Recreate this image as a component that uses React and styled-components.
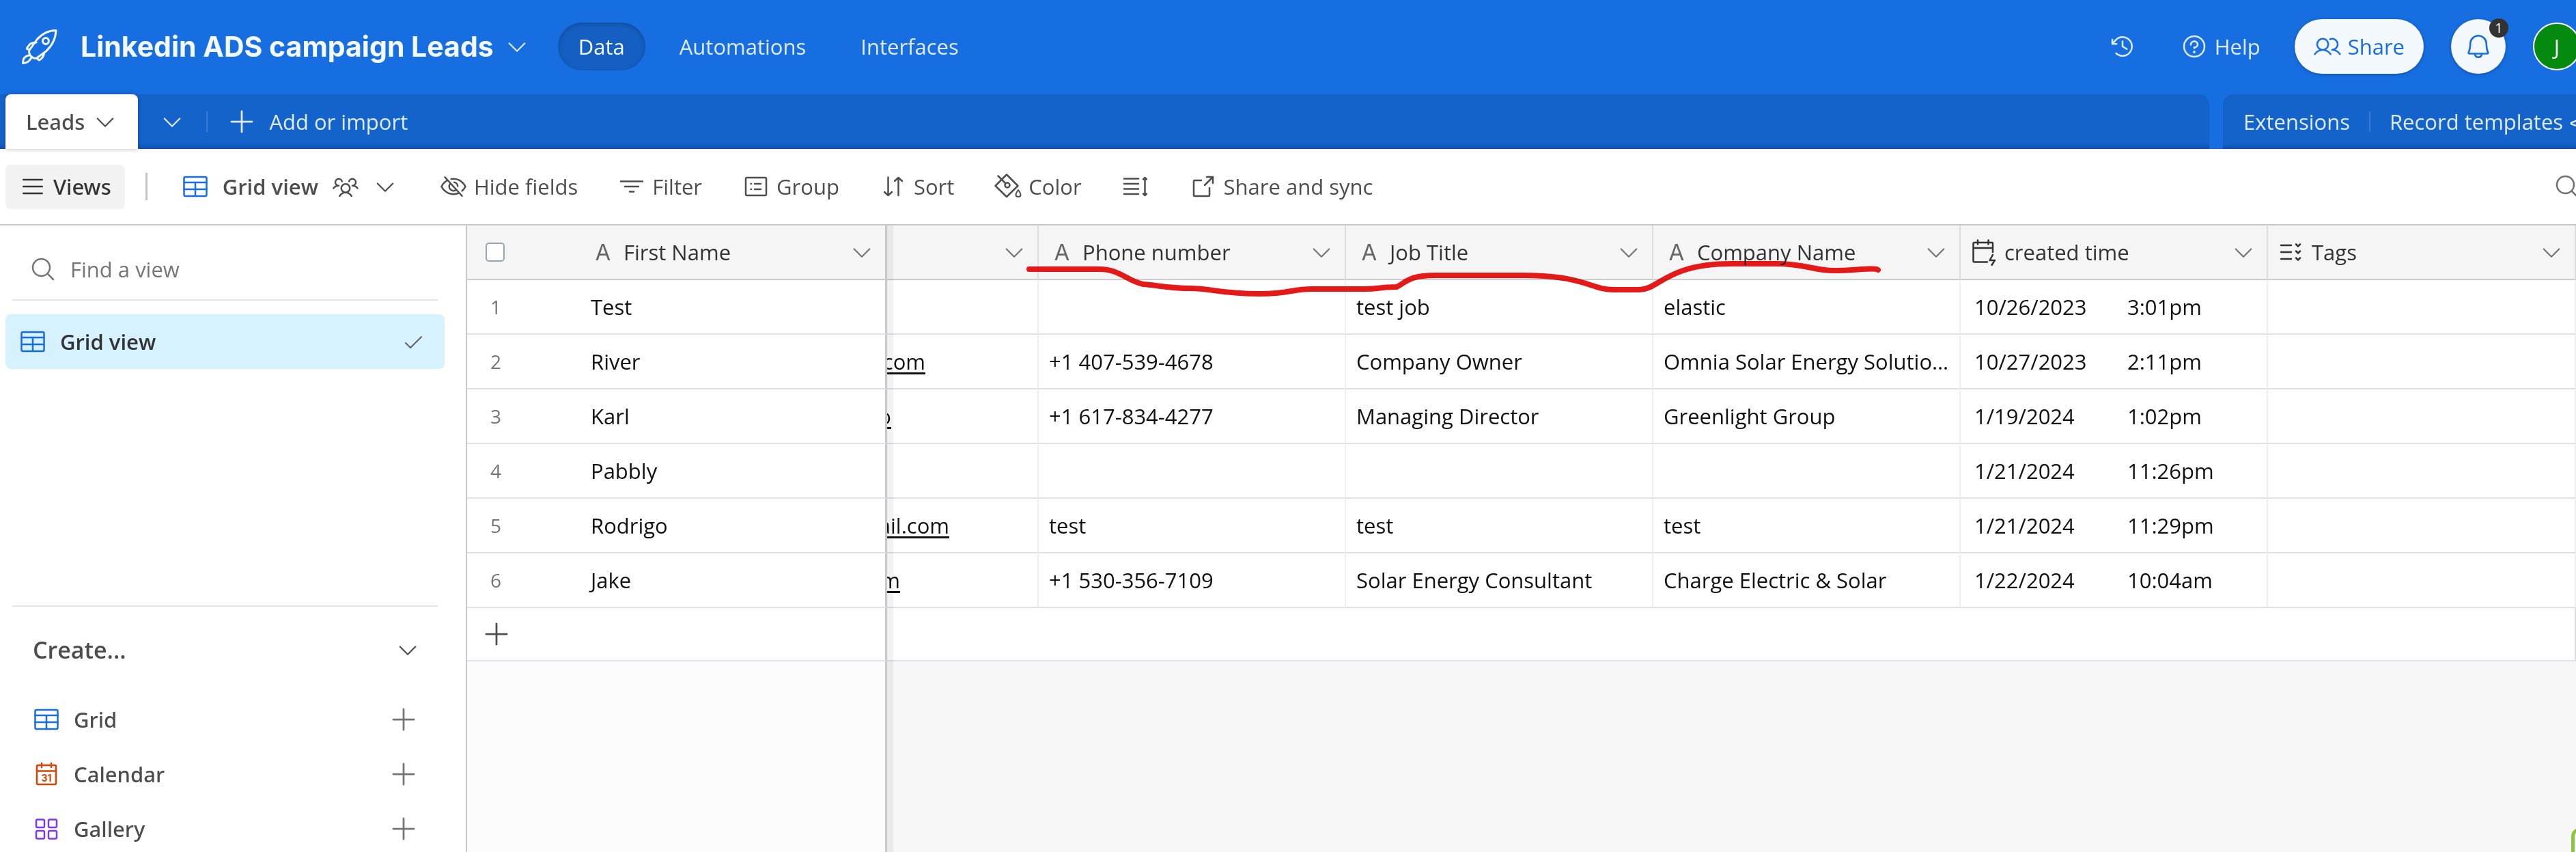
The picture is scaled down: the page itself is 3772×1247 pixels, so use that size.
import React from "react";
import styled, { createGlobalStyle } from "styled-components";
import {
  PiBell,
  PiCaretDown,
  PiCheck,
  PiClockCounterClockwise,
  PiEyeSlash,
  PiList,
  PiMagnifyingGlass,
  PiPlus,
  PiQuestion,
  PiSparkle,
  PiUsers,
  PiUsersThree,
} from "react-icons/pi";

const GlobalStyle = createGlobalStyle`
  * {
    box-sizing: border-box;
  }
  body {
    margin: 0;
    font-family: "Open Sans", "Noto Sans", sans-serif;
    font-size: 31px;
    line-height: 40px;
    color: #4d4d4d;
    background: #ffffff;
  }
  button, input {
    font: inherit;
    color: inherit;
  }
  button {
    border: 0;
    padding: 0;
    background: none;
    white-space: nowrap;
    cursor: pointer;
  }
  svg {
    flex-shrink: 0;
    display: block;
  }
`
const Page = styled.div`
  position: relative;
  display: flex;
  flex-direction: column;
  height: 100vh;
  overflow: hidden;
`

/* top bar */
const TopBar = styled.header`
  display: flex;
  align-items: center;
  justify-content: space-between;
  height: 138px;
  flex-shrink: 0;
  padding: 0 0 2px 28px;
  background: #176ee1;
  color: #dfebfb;
`
const BarSide = styled.div`
  display: flex;
  align-items: center;
`
const BaseName = styled.h1`
  margin: 0 16px 0 30px;
  font-family: "Inter", sans-serif;
  font-size: 41px;
  font-weight: 700;
  line-height: 50px;
  color: #f3f8fd;
  white-space: nowrap;
`
const Nav = styled.nav`
  display: flex;
  gap: 20px;
  margin-left: 42px;
`
const NavLink = styled.a`
  height: 70px;
  line-height: 70px;
  padding: 0 30px;
  border-radius: 35px;
  text-decoration: none;
  color: ${props => props.$active ? "#f3f8fd" : "#dfebfb"};
  background: ${props => props.$active ? "#145fc1" : "transparent"};
  box-shadow: ${props => props.$active ? "inset 0 2px 6px rgba(0, 0, 0, 0.2)" : "none"};
`
const IconButton = styled.button`
  display: flex;
  align-items: center;
  gap: ${props => props.$gap || 10}px;
`
const HelpArea = styled.div`
  display: flex;
  align-items: center;
  gap: 65px;
  margin-right: 50px;
`
const ShareButton = styled(IconButton)`
  height: 80px;
  padding: 0 28px;
  border-radius: 40px;
  background: #f3f8fd;
  color: #176ee1;
  box-shadow: 0 1px 5px rgba(0, 0, 0, 0.3);
`
const BellButton = styled.button`
  position: relative;
  display: grid;
  place-items: center;
  width: 80px;
  height: 80px;
  margin: 0 40px;
  border-radius: 50%;
  background: #f3f8fd;
  color: #176ee1;
  box-shadow: 0 1px 5px rgba(0, 0, 0, 0.3);
`
const Badge = styled.span`
  position: absolute;
  top: -1px;
  right: -4px;
  width: 28px;
  height: 28px;
  border-radius: 50%;
  background: #333333;
  color: #ffffff;
  font-size: 20px;
  line-height: 28px;
`
const Avatar = styled.div`
  width: 70px;
  height: 70px;
  margin-right: -7px;
  border: 2px solid #ffffff;
  border-radius: 50%;
  background: #048a0e;
  color: #ffffff;
  line-height: 66px;
  text-align: center;
`

/* table tabs */
const TabBar = styled.div`
  display: flex;
  gap: 20px;
  height: 80px;
  flex-shrink: 0;
  background: #176ee1;
  color: #dfebfb;
`
const TabPanel = styled.div`
  display: flex;
  align-items: center;
  background: #1463cb;
  box-shadow: inset 0 -8px 6px -5px rgba(0, 0, 60, 0.25);
  white-space: nowrap;
`
const TablesPanel = styled(TabPanel)`
  flex: 1;
  padding-left: 8px;
  border-top-right-radius: 15px;
`
const ToolsPanel = styled(TabPanel)`
  flex: 0 0 517px;
  gap: 28px;
  padding-left: 30px;
  border-top-left-radius: 15px;
  overflow: hidden;
`
const TableTab = styled.button`
  display: flex;
  align-items: center;
  gap: 12px;
  height: 80px;
  padding: 0 30px;
  border-radius: 8px 8px 0 0;
  background: #ffffff;
  color: #4d4d4d;
  font-family: "Noto Sans", sans-serif;
  font-weight: 500;
  box-shadow: 0 0 6px rgba(0, 0, 60, 0.3);
`
const TabDivider = styled.div`
  flex-shrink: 0;
  width: 2px;
  height: 30px;
  background: #3a7cd4;
`
const TabCaret = styled.button`
  margin: 0 32px;
`
const AddTable = styled(IconButton)`
  margin-left: 28px;
`

/* view toolbar */
const Toolbar = styled.div`
  display: flex;
  align-items: center;
  height: 112px;
  flex-shrink: 0;
  padding: 0 0 0 8px;
  border-bottom: 2px solid #c8c8c8;
`
const ViewsButton = styled(IconButton)`
  height: 65px;
  padding: 0 20px;
  border-radius: 8px;
  background: #f2f2f2;
  color: #333333;
  font-family: "Noto Sans", sans-serif;
  font-weight: 500;
`
const ToolDivider = styled.div`
  width: 3px;
  height: 40px;
  margin: 0 50px 0 30px;
  background: #c4c4c4;
`
const CurrentView = styled(IconButton)`
  font-weight: 600;
`
const Tools = styled.div`
  display: flex;
  gap: 59px;
  margin-left: 62px;
`
const SearchButton = styled.button`
  margin: 0 -7px 0 auto;
  color: #707070;
`

/* sidebar */
const Body = styled.div`
  display: flex;
  flex: 1;
  min-height: 0;
`
const Sidebar = styled.aside`
  display: flex;
  flex-direction: column;
  flex: 0 0 684px;
  border-right: 2px solid #c8c8c8;
`
const FindView = styled.label`
  display: flex;
  align-items: center;
  gap: 20px;
  height: 110px;
  margin: 0 41px 0 18px;
  padding: 20px 0 0 25px;
  border-bottom: 2px solid #e5e5e5;
  color: #757575;
`
const FindInput = styled.input`
  flex: 1;
  min-width: 0;
  padding: 0;
  border: 0;
  outline: 0;
  background: none;
  &::placeholder {
    color: #757575;
    opacity: 1;
  }
`
const ViewItem = styled.a`
  display: flex;
  align-items: center;
  gap: 20px;
  height: 80px;
  margin: 20px 31px 0 8px;
  padding: 0 30px 0 20px;
  border-radius: 8px;
  background: #d6f1ff;
  color: #333333;
  font-weight: 600;
  text-decoration: none;
`
const Fill = styled.span`
  flex: 1;
  text-align: left;
  white-space: nowrap;
`
const CreateSection = styled.section`
  flex: 0 0 361px;
  min-height: 0;
  margin: auto 41px 0 18px;
  border-top: 2px solid #e5e5e5;
`
const CreateHeader = styled.button`
  display: flex;
  align-items: center;
  width: 100%;
  height: 125px;
  padding: 0 26px 0 30px;
  font-size: 34px;
  font-weight: 600;
`
const CreateItem = styled.button`
  display: flex;
  align-items: center;
  gap: 20px;
  width: 100%;
  height: 80px;
  padding: 0 28px 0 30px;
  font-family: "Noto Sans", sans-serif;
  font-weight: 500;
`
const Tint = styled.span`
  color: ${props => props.$color};
`

/* grid */
const GridArea = styled.main`
  position: relative;
  display: flex;
  flex-direction: column;
  flex: 1;
  min-width: 0;
`
const Table = styled.table`
  width: 100%;
  table-layout: fixed;
  border-collapse: separate;
  border-spacing: 0;
  background: #ffffff;
`
const Col = styled.col`
  width: ${props => props.$width}px;
`
const HeadCell = styled.th`
  height: 80px;
  padding: 0 16px 0 ${props => props.$pad || 14}px;
  border-bottom: 2px solid #cccccc;
  border-right: ${props => props.$frozen ? "3px solid #c8c8c8" : props.$plain ? "0" : "2px solid #dddddd"};
  background: #f5f5f5;
  color: #333333;
  font-weight: 400;
  text-align: left;
`
const HeadInner = styled.div`
  display: flex;
  align-items: center;
  gap: 10px;
`
const TypeLetter = styled.span`
  width: 40px;
  font-family: "Inter", sans-serif;
  font-size: 33px;
  font-weight: 400;
  text-align: center;
  color: #666666;
`
const HeadCaret = styled.button`
  color: #757575;
`
const Checkbox = styled.input`
  appearance: none;
  display: block;
  width: 28px;
  height: 28px;
  margin: 0;
  border: 2px solid #98a4ae;
  border-radius: 5px;
  background: #ffffff;
`
const Cell = styled.td`
  height: 80px;
  padding: 0 15px 0 ${props => props.$frozen ? 19 : 15}px;
  border-bottom: 2px solid #dde1e5;
  border-right: ${props => props.$frozen ? "3px solid #c8c8c8" : props.$plain ? "0" : "2px solid #f0f0f0"};
  color: #111111;
  overflow: hidden;
  text-overflow: ellipsis;
  white-space: nowrap;
`
const NumberCell = styled(Cell)`
  padding: 0 0 0 34px;
  font-size: 28px;
  color: #757575;
`
const EmailCell = styled(Cell)`
  padding: 0;
`
const Email = styled.a`
  display: flex;
  justify-content: flex-end;
  width: ${props => props.$shown}px;
  overflow: hidden;
  color: #111111;
  text-decoration: underline;
  text-decoration-thickness: 3px;
  text-underline-offset: 4px;
`
const DateTime = styled.div`
  display: grid;
  grid-template-columns: 224px 1fr;
  padding-left: 5px;
`
const AddCell = styled.td`
  height: 78px;
  padding: 0 0 0 21px;
  border-bottom: 2px solid #dde1e5;
  border-right: ${props => props.$frozen ? "3px solid #c8c8c8" : "2px solid #dddddd"};
`
const AddRecord = styled.button`
  display: block;
`
const Below = styled.div`
  display: flex;
  flex: 1;
  background: #f7f7f7;
`
const BelowFrozen = styled.div`
  width: 615px;
  border-right: 3px solid #c8c8c8;
  background: #fcfcfc;
`
const FrozenShadow = styled.div`
  position: absolute;
  top: 0;
  bottom: 0;
  left: 615px;
  width: 9px;
  background: rgba(0, 0, 0, 0.05);
`
const Scribble = styled.svg`
  position: absolute;
  top: 50px;
  left: 816px;
  mix-blend-mode: darken;
  pointer-events: none;
`
const HelpBubble = styled.div`
  position: absolute;
  right: -53px;
  bottom: -25px;
  width: 60px;
  height: 60px;
  border: 5px solid #8cc63f;
  border-radius: 12px;
  background: #ffffff;
`

function Icon(props) {
  return (
    <svg width="40" height="40" viewBox="0 0 40 40" fill="none" stroke="currentColor"
      strokeWidth="2.5" strokeLinecap="round" strokeLinejoin="round" aria-hidden="true">
      {props.children}
    </svg>
  );
}

const RocketIcon = () => (
  <svg width="60" height="60" viewBox="0 0 60 60" fill="none" stroke="#f3f8fd"
    strokeWidth="3" strokeLinejoin="round" strokeLinecap="round" aria-hidden="true">
    <path d="M54 6.500C42 6.500 33 12 26 20L15 35.500C14 38 15 41 16.500 43.500C19 46 22 48 25 47.500L39.500 37C48 29 53.500 20 54 6.500Z" />
    <circle cx="39" cy="22" r="4.500" />
    <path d="M25 24C18 25 16 25 14 29C12 31 11 32 11.500 33.500L15 34.500" />
    <path d="M36.500 40C36 44 34 47 31 49C29 50.500 28 50.500 27 47.500" />
    <path d="M14.500 43C8 44 5.500 48 5.500 54.500C12 54 15 52 17.500 47" />
  </svg>
)
const GridIcon = () => (
  <Icon>
    <rect x="3.500" y="6" width="33" height="28" rx="2" />
    <path d="M3.500 14H36.500M3.500 24H36.500M20 14V34" />
  </Icon>
)
const CalendarIcon = () => (
  <Icon>
    <rect x="6" y="7" width="28" height="28" rx="1.500" />
    <path d="M6 15.500H34M13 4V10M27 4V10" />
    <text x="20" y="30.500" textAnchor="middle" fontSize="14" fontWeight="700"
      fontFamily="Inter, sans-serif" fill="currentColor" stroke="none">31</text>
  </Icon>
)
const GalleryIcon = () => (
  <Icon>
    <rect x="5" y="6.500" width="12" height="11.500" rx="2" />
    <rect x="23" y="6.500" width="12" height="11.500" rx="2" />
    <rect x="5" y="23" width="12" height="11.500" rx="2" />
    <rect x="23" y="23" width="12" height="11.500" rx="2" />
  </Icon>
)
const FilterIcon = () => (
  <Icon><path d="M4 12.500H36M10 20H30M17 27.500H23" /></Icon>
)
const GroupIcon = () => (
  <Icon>
    <rect x="5" y="7" width="30" height="26" rx="1.500" />
    <path d="M18 16H27M18 24H27M12.500 16H13M12.500 24H13" />
  </Icon>
)
const SortIcon = () => (
  <Icon><path d="M12.500 6.500V33M7 28L12.500 33L18 28M27.500 33V7M22 12L27.500 7L33 12" /></Icon>
)
const ColorIcon = () => (
  <Icon>
    <path d="M18 2.500L34.500 19L18 35L1.500 19Z" />
    <path d="M5.500 4.500L16.500 15.500" />
    <circle cx="19" cy="18" r="3.500" />
    <path d="M35 25C32.500 28.500 31.500 30 31.500 32C31.500 36 38.500 36 38.500 32C38.500 30 37.500 28.500 35 25Z" strokeWidth="2" />
  </Icon>
)
const HeightIcon = () => (
  <Icon><path d="M3 8.500H24M3 16H24M3 23.500H24M3 31H24M33.500 8V32M31 9.500L33.500 7L36 9.500M31 30.500L33.500 33L36 30.500" /></Icon>
)
const ExportIcon = () => (
  <Icon><path d="M17 11H7Q6 11 6 12V33Q6 34 7 34H28Q29 34 29 33V22M22 18L34 6M25 6H34V15" strokeLinejoin="miter" /></Icon>
)
const CreatedIcon = () => (
  <Icon>
    <path d="M25 34.500H6Q4.500 34.500 4.500 33V7.500Q4.500 6 6 6H32Q33 6 33 7.500V20M4.500 14H33M11 2.500V8.500M26.500 2.500V8.500" />
    <path d="M33 24L28.500 32H36L31.500 39" />
  </Icon>
)
const TagsIcon = () => (
  <Icon>
    <path d="M5 10H20M5 20H20M5 30H20" />
    <path d="M27 8.500L30 11.500L33 8.500M27 18.500L30 21.500L33 18.500M27 28.500L30 31.500L33 28.500" />
  </Icon>
)
const Caret = () => <PiCaretDown size={36} aria-hidden="true" />

const tools = [
  { label: "Hide fields", icon: <PiEyeSlash size={40} /> },
  { label: "Filter", icon: <FilterIcon /> },
  { label: "Group", icon: <GroupIcon /> },
  { label: "Sort", icon: <SortIcon /> },
  { label: "Color", icon: <ColorIcon /> },
  { label: "", icon: <HeightIcon /> },
  { label: "Share and sync", icon: <ExportIcon /> },
]

const createItems = [
  { label: "Grid", color: "#176ee1", icon: <GridIcon /> },
  { label: "Calendar", color: "#d54402", icon: <CalendarIcon /> },
  { label: "Gallery", color: "#7c39ed", icon: <GalleryIcon /> },
]

const letter = <TypeLetter aria-hidden="true">A</TypeLetter>
const fields = [
  { label: "Phone number", icon: letter },
  { label: "Job Title", icon: letter },
  { label: "Company Name", icon: letter },
  { label: "created time", icon: <CreatedIcon /> },
  { label: "Tags", icon: <TagsIcon /> },
]

const leads = [
  { name: "Test", email: "", shown: 0, phone: "", job: "test job", company: "elastic", date: "10/26/2023", time: "3:01pm" },
  { name: "River", email: "com", shown: 56, phone: "+1 407-539-4678", job: "Company Owner", company: "Omnia Solar Energy Solutions", date: "10/27/2023", time: "2:11pm" },
  { name: "Karl", email: "o", shown: 6, phone: "+1 617-834-4277", job: "Managing Director", company: "Greenlight Group", date: "1/19/2024", time: "1:02pm" },
  { name: "Pabbly", email: "", shown: 0, phone: "", job: "", company: "", date: "1/21/2024", time: "11:26pm" },
  { name: "Rodrigo", email: "ail.com", shown: 91, phone: "test", job: "test", company: "test", date: "1/21/2024", time: "11:29pm" },
  { name: "Jake", email: "m", shown: 19, phone: "+1 530-356-7109", job: "Solar Energy Consultant", company: "Charge Electric & Solar", date: "1/22/2024", time: "10:04am" },
]

function Header() {
  return (
    <TopBar>
      <BarSide>
        <RocketIcon />
        <BaseName>Linkedin ADS campaign Leads</BaseName>
        <button aria-label="Base menu"><Caret /></button>
        <Nav>
          <NavLink href="#data" $active>Data</NavLink>
          <NavLink href="#automations">Automations</NavLink>
          <NavLink href="#interfaces">Interfaces</NavLink>
        </Nav>
      </BarSide>
      <BarSide>
        <HelpArea>
          <button aria-label="History"><PiClockCounterClockwise size={40} /></button>
          <IconButton><PiQuestion size={40} />Help</IconButton>
        </HelpArea>
        <ShareButton><PiUsers size={40} />Share</ShareButton>
        <BellButton aria-label="Notifications">
          <PiBell size={42} />
          <Badge>1</Badge>
        </BellButton>
        <Avatar>J</Avatar>
      </BarSide>
    </TopBar>
  );
}

function Tabs() {
  return (
    <TabBar>
      <TablesPanel>
        <TableTab>Leads <Caret /></TableTab>
        <TabCaret aria-label="All tables"><Caret /></TabCaret>
        <TabDivider />
        <AddTable $gap={18}><PiPlus size={44} />Add or import</AddTable>
      </TablesPanel>
      <ToolsPanel>
        <button>Extensions</button>
        <TabDivider />
        <IconButton $gap={8}>Record templates <PiSparkle size={40} /></IconButton>
      </ToolsPanel>
    </TabBar>
  );
}

function ViewBar() {
  return (
    <Toolbar>
      <ViewsButton><PiList size={40} />Views</ViewsButton>
      <ToolDivider />
      <CurrentView $gap={20}>
        <Tint $color="#176ee1"><GridIcon /></Tint>
        Grid view
        <PiUsersThree size={40} />
        <Caret />
      </CurrentView>
      <Tools>
        {tools.map(tool => (
          <IconButton key={tool.label} aria-label={tool.label || "Row height"} $gap={10}>
            {tool.icon}{tool.label}
          </IconButton>
        ))}
      </Tools>
      <SearchButton aria-label="Search"><PiMagnifyingGlass size={40} /></SearchButton>
    </Toolbar>
  );
}

function ViewsPanel() {
  return (
    <Sidebar>
      <FindView>
        <PiMagnifyingGlass size={40} />
        <FindInput placeholder="Find a view" aria-label="Find a view" />
      </FindView>
      <ViewItem href="#grid">
        <Tint $color="#176ee1"><GridIcon /></Tint>
        <Fill>Grid view</Fill>
        <PiCheck size={32} color="#616161" />
      </ViewItem>
      <CreateSection>
        <CreateHeader><Fill>Create...</Fill><Caret /></CreateHeader>
        {createItems.map(item => (
          <CreateItem key={item.label}>
            <Tint $color={item.color}>{item.icon}</Tint>
            <Fill>{item.label}</Fill>
            <PiPlus size={44} color="#757575" />
          </CreateItem>
        ))}
      </CreateSection>
    </Sidebar>
  );
}

function LeadsGrid() {
  return (
    <GridArea>
      <Table>
        <colgroup>
          <Col $width={162} />
          <Col $width={453} />
          <Col $width={222} />
          <Col $width={450} />
          <Col $width={450} />
          <Col $width={450} />
          <Col $width={450} />
          <col />
        </colgroup>
        <thead>
          <tr>
            <HeadCell $pad={27} $plain><Checkbox type="checkbox" aria-label="Select all" /></HeadCell>
            <HeadCell $pad={17} $frozen>
              <HeadInner>{letter}<Fill>First Name</Fill><HeadCaret aria-label="First Name menu"><Caret /></HeadCaret></HeadInner>
            </HeadCell>
            <HeadCell>
              <HeadInner><Fill /><HeadCaret aria-label="Field menu"><Caret /></HeadCaret></HeadInner>
            </HeadCell>
            {fields.map(field => (
              <HeadCell key={field.label}>
                <HeadInner>
                  {field.icon}
                  <Fill>{field.label}</Fill>
                  <HeadCaret aria-label={field.label + " menu"}><Caret /></HeadCaret>
                </HeadInner>
              </HeadCell>
            ))}
          </tr>
        </thead>
        <tbody>
          {leads.map((lead, i) => (
            <tr key={lead.name}>
              <NumberCell $plain>{i + 1}</NumberCell>
              <Cell $frozen>{lead.name}</Cell>
              <EmailCell>{lead.email && <Email href="#mail" $shown={lead.shown}>{lead.email}</Email>}</EmailCell>
              <Cell>{lead.phone}</Cell>
              <Cell>{lead.job}</Cell>
              <Cell>{lead.company}</Cell>
              <Cell><DateTime><span>{lead.date}</span><span>{lead.time}</span></DateTime></Cell>
              <Cell />
            </tr>
          ))}
          <tr>
            <AddCell colSpan={2} $frozen><AddRecord aria-label="Add record"><PiPlus size={44} /></AddRecord></AddCell>
            <AddCell colSpan={6} />
          </tr>
        </tbody>
      </Table>
      <Below><BelowFrozen /></Below>
      <FrozenShadow />
      <Scribble width="1270" height="60" viewBox="1500 380 1270 60" fill="none" stroke="#e61919"
        strokeWidth="8" strokeLinecap="round" strokeLinejoin="round">
        <path d="M1507 394H1610C1640 394 1650 411 1674 416C1690 417 1715 422 1742 422C1775 422 1785 430 1845 430C1890 430 1890 423 1921 423H1998C2020 423 2022 420 2045 420C2058 414 2062 403 2101 403H2229C2320 403 2330 424 2362 424H2400C2430 424 2440 386 2535 386H2600C2645 386 2655 396 2685 396C2715 396 2745 391 2750 395" />
      </Scribble>
    </GridArea>
  );
}

function App() {
  return (
    <Page>
      <GlobalStyle />
      <Header />
      <Tabs />
      <ViewBar />
      <Body>
        <ViewsPanel />
        <LeadsGrid />
      </Body>
      <HelpBubble />
    </Page>
  );
}
export default App;
